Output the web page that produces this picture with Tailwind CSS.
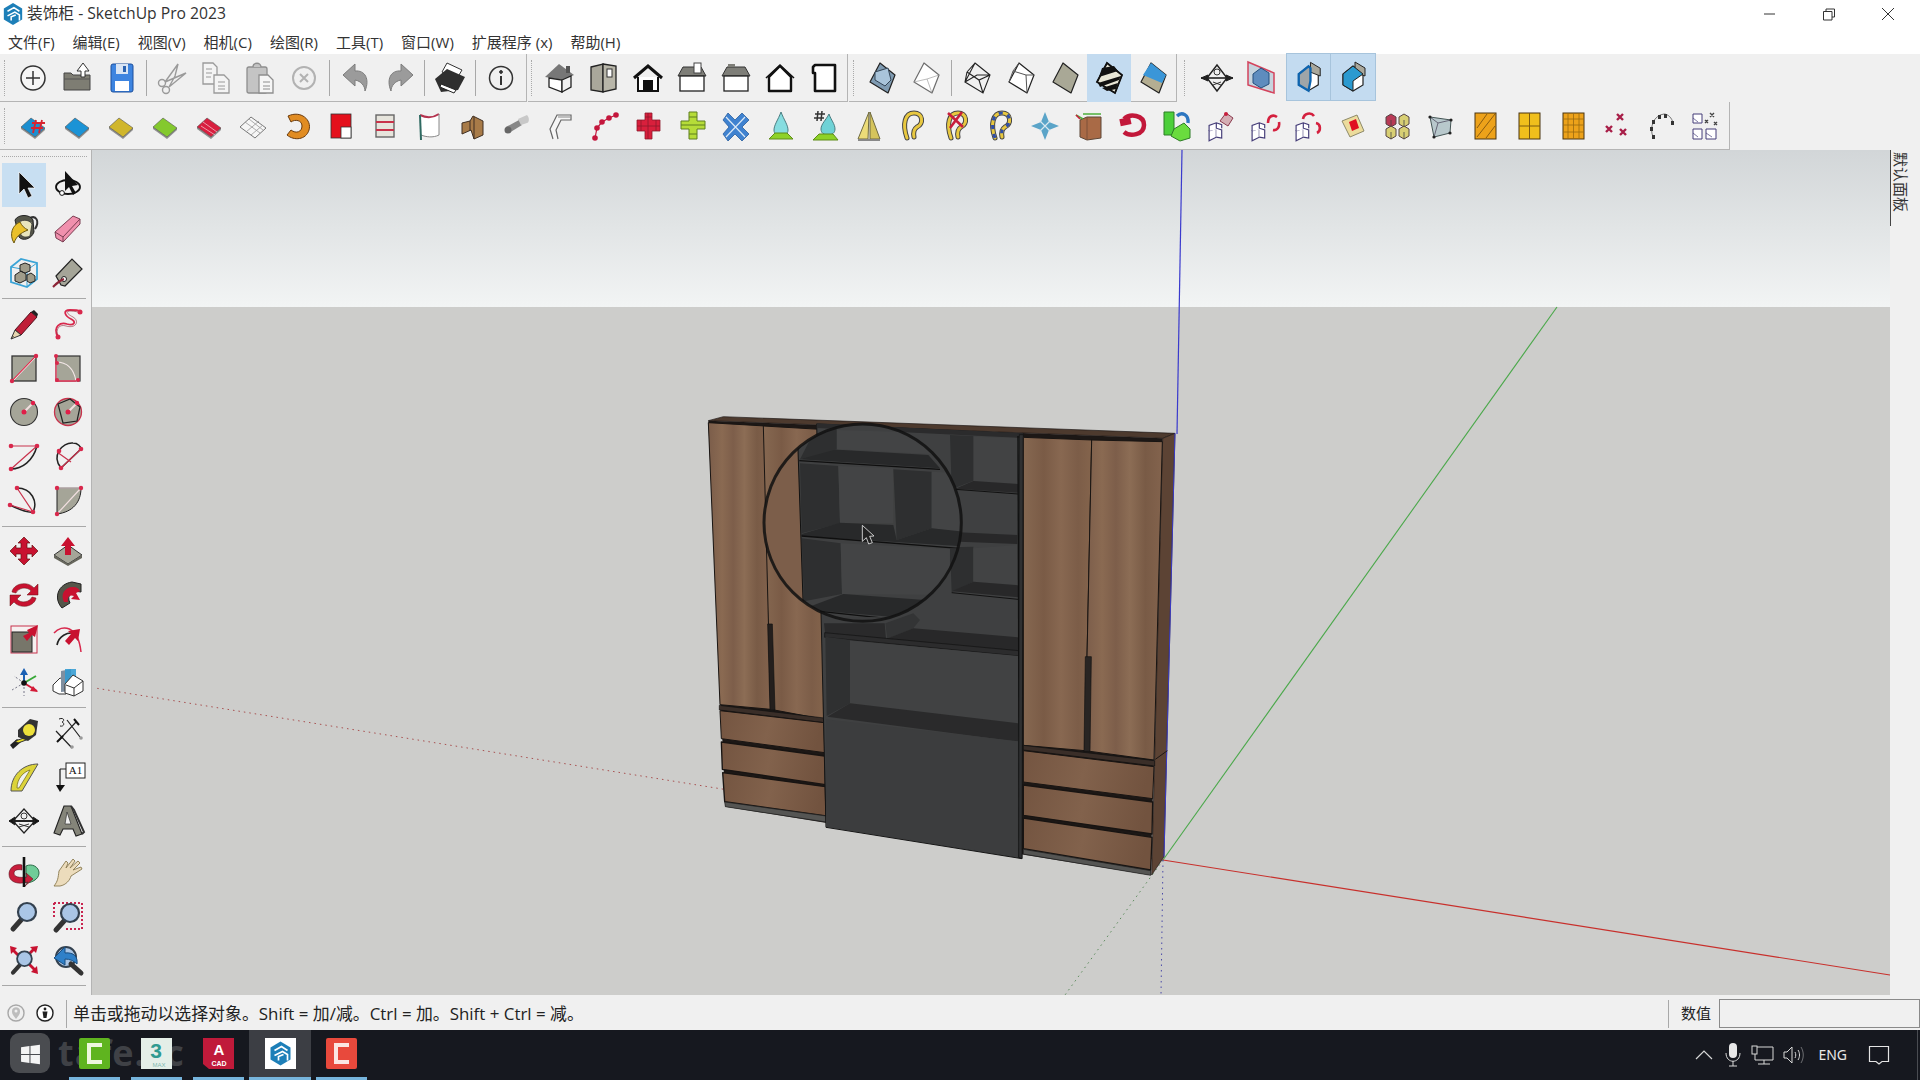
<!DOCTYPE html>
<html lang="zh-CN">
<head>
<meta charset="UTF-8">
<title>装饰柜 - SketchUp Pro 2023</title>
<script src="https://cdn.jsdelivr.net/npm/@tailwindcss/browser@4"></script>
</head>
<body class="w-[1920px] h-[1080px] overflow-hidden flex flex-col bg-white text-[#222] font-['Open_Sans','Noto_Sans_CJK_SC',sans-serif]">

<!-- shared icon parts -->
<svg class="absolute w-0 h-0">
  <defs>
    <g id="plane"><path d="M-12 1L-2-8L12 2L2 11z" stroke="#555" stroke-width=".6"/><path d="M-12 1L2 11L12 2L12 4L2 13L-12 3z" fill="#444" opacity=".55"/></g>
    <g id="hook"><path d="M-6 12C-11-2-8-13 1-13C10-13 11-2 4 1C1 3 0 6 1 11" fill="none" stroke="#444" stroke-width="5" stroke-linecap="round"/><path d="M-6 12C-11-2-8-13 1-13C10-13 11-2 4 1C1 3 0 6 1 11" fill="none" stroke="#e8c840" stroke-width="3" stroke-linecap="round"/></g>
    <g id="wirebox" fill="#fff" stroke="#443c78" stroke-width="1.3"><path d="M-11 1L-3-2V8L-11 12z"/><path d="M-11 1V-5L-3-8L3-6V-2M-3-8V-2L3 0V9L-3 8"/></g>
    <g id="house"><path d="M-14-2L-9-11H9L14-2z" fill="#7e7e78" stroke="#333"/><rect x="-12" y="-2" width="24" height="15" fill="#fff" stroke="#222" stroke-width="1.3"/></g>
    <g id="bigbox"><path d="M-2-15L13-3L6 15L-12 4z" stroke="#222" stroke-width="1.2" stroke-linejoin="round"/></g>
    <g id="arrowhouse"><path d="M-10-3L0-11L10-3V8L0 14L-10 8z" fill="#fff" stroke="#222" stroke-width="1.2"/><path d="M2-15L12-9V-1L2-5z" fill="#a9a79b" stroke="#222"/></g>
    <g id="mag"><path d="M-11 13L-3 4" stroke="#333" stroke-width="5" stroke-linecap="round"/><circle cx="3" cy="-4" r="9" fill="#aac6e6" stroke="#33414f" stroke-width="2.2"/></g>
    <g id="su"><circle r="12" fill="#fff"/><path d="M-10-6L0-12L10-6V6L0 12L-10 6z" fill="#1d7fb8"/><path d="M-6-3L1-7L7-3M-6 2L2-2L7 1V7M-2 7V3L3 1" fill="none" stroke="#fff" stroke-width="1.7"/></g>
  </defs>
</svg>

<!-- title bar -->
<header class="h-[27px] flex items-center pl-[2px] relative">
  <svg class="w-[22px] h-[22px]" viewBox="-12 -12 24 24"><use href="#su"/></svg>
  <span class="ml-[3px] text-[15.7px] leading-none text-[#333]">装饰柜 - SketchUp Pro 2023</span>
  <div class="ml-auto flex items-center gap-[39px] pr-[22px] pt-[1px]">
    <svg class="w-5 h-5" viewBox="0 0 20 20"><path d="M4 10H15" stroke="#333"/></svg>
    <svg class="w-5 h-5" viewBox="0 0 20 20" fill="none" stroke="#333"><path d="M4.5 7.5H13V16H4.5zM7 7.5V5H15.5V13H13"/></svg>
    <svg class="w-5 h-5" viewBox="0 0 20 20"><path d="M4 4L16 16M16 4L4 16" stroke="#333"/></svg>
  </div>
</header>

<!-- menu bar -->
<nav class="h-[27px] flex items-center pl-[8px] pt-[4px] gap-[18px] text-[15px] leading-none text-[#333]">
  <span>文件(F)</span><span>编辑(E)</span><span>视图(V)</span><span>相机(C)</span><span>绘图(R)</span><span>工具(T)</span><span>窗口(W)</span><span>扩展程序 (x)</span><span>帮助(H)</span>
</nav>

<!-- toolbar row 1 -->
<div class="h-12 bg-[#f0f0f0] flex">
  <div class="flex w-[527px] pl-[4px] border-b border-r border-[#b4b4b4] items-start">
    <div class="w-[7px] h-[36px] mt-[6px] border-l border-dotted border-[#aaa]"></div>
    <svg class="w-11 h-[47px]" viewBox="-22 -24 44 47"><circle r="12" fill="#f6f6f6" stroke="#333" stroke-width="1.5"/><path d="M-7 0H7M0-7V7" stroke="#333" stroke-width="1.5"/></svg>
    <svg class="w-11 h-[47px]" viewBox="-22 -24 44 47"><path d="M-13-5H-6L-4-3H13V12H-13z" fill="#7e7d73" stroke="#444"/><path d="M-13 1H13" stroke="#555"/><path d="M4-1V-7H0L6-15L12-7H8V-1z" fill="#fff" stroke="#333"/></svg>
    <svg class="w-11 h-[47px]" viewBox="-23 -24 44 47"><rect x="-11" y="-14" width="22" height="28" rx="2" fill="#3d84e0" stroke="#1c4f9c"/><rect x="-6" y="-14" width="12" height="10" fill="#d8e4f4"/><rect x="1" y="-12" width="3" height="6" fill="#2a62b0"/><rect x="-7" y="3" width="14" height="10" fill="#fff"/></svg>
    <div class="w-px h-9 mx-[3px] mt-[6px] bg-[#a8a8a8]"></div>
    <svg class="w-11 h-[47px]" viewBox="-22 -24 44 47" fill="none" stroke="#9a9a9a" stroke-width="1.4"><circle cx="-10" cy="5" r="3.5"/><circle cx="-6" cy="12" r="3.5"/><path d="M-7 4L6-14L3-2L-3 9M-7 4L14-5L-3 9"/></svg>
    <svg class="w-11 h-[47px]" viewBox="-22 -24 44 47" fill="#f4f4f4" stroke="#9a9a9a" stroke-width="1.3"><path d="M-13-15H-3L1-11V6H-13z"/><path d="M-2-3H8L13 2V15H-2z"/><path d="M-10-9H-4M-10-5H-4M-10-1H-5M2 4H9M2 8H9M2 11H9" stroke-width="1"/></svg>
    <svg class="w-11 h-[47px]" viewBox="-22 -24 44 47" stroke="#8e8e8e" stroke-width="1.3"><rect x="-13" y="-11" width="20" height="26" rx="2" fill="#c4c4c4"/><path d="M-7-11C-7-16 1-16 1-11" fill="#c4c4c4"/><path d="M-1-3H8L13 2V15H-1z" fill="#f6f6f6"/><path d="M3 4H10M3 8H10M3 11H10" stroke-width="1"/></svg>
    <svg class="w-11 h-[47px]" viewBox="-22 -24 44 47" fill="none" stroke="#b2b2b2"><circle r="11" stroke-width="2"/><path d="M-4-4L4 4M4-4L-4 4" stroke-width="2"/></svg>
    <div class="w-px h-9 mx-[3px] mt-[6px] bg-[#a8a8a8]"></div>
    <svg class="w-11 h-[47px]" viewBox="-24 -24 44 47"><path d="M-14-3L-2-14V-7C8-8 13 1 8 13C8 8 4 3-2 2V8z" fill="#9b9b9b" stroke="#7c7c7c"/></svg>
    <svg class="w-11 h-[47px]" viewBox="-22 -24 44 47"><path transform="scale(-1 1)" d="M-14-3L-2-14V-7C8-8 13 1 8 13C8 8 4 3-2 2V8z" fill="#9b9b9b" stroke="#7c7c7c"/></svg>
    <div class="w-px h-9 mx-[3px] mt-[6px] bg-[#a8a8a8]"></div>
    <svg class="w-11 h-[47px]" viewBox="-22 -24 44 47"><path d="M-3-15L12-8L6 2L-8-6z" fill="#fff" stroke="#333"/><path d="M-15 1L-3-9L15-1L8 12L-9 14z" fill="#2f2f2f"/><path d="M-9 6L6 12L4 15L-10 9z" fill="#fff" stroke="#222"/></svg>
    <div class="w-px h-9 mx-[3px] mt-[6px] bg-[#a8a8a8]"></div>
    <svg class="w-11 h-[47px]" viewBox="-22 -24 44 47" fill="none" stroke="#333"><circle r="11.5" stroke-width="1.5"/><circle cy="-6" r="1.4" fill="#333"/><path d="M0-2V7" stroke-width="2"/></svg>
  </div>
  <div class="flex w-[320px] ml-[1px] pl-[3px] border-b border-r border-[#b4b4b4] items-start">
    <div class="w-[7px] h-[36px] mt-[6px] border-l border-dotted border-[#aaa]"></div>
    <svg class="w-11 h-[47px]" viewBox="-22 -24 44 47"><path d="M-15-1L-1-14L14-3L3 2z" fill="#777"/><path d="M-11 0L2 2V14L-11 9z" fill="#fff" stroke="#222" stroke-width="1.3"/><path d="M2 2L11-2V9L2 14z" fill="#f0f0f0" stroke="#222" stroke-width="1.3"/><path d="M6-12H10V-5H6z" fill="#555"/></svg>
    <svg class="w-11 h-[47px]" viewBox="-22 -24 44 47"><path d="M-13-11L-1-14V14L-13 12z" fill="#a9a79b" stroke="#222" stroke-width="1.3"/><path d="M-1-14L12-12V11L-1 14z" fill="#b8b6a9" stroke="#222" stroke-width="1.3"/><rect x="3" y="-9" width="5" height="8" fill="#fff" stroke="#333"/></svg>
    <svg class="w-11 h-[47px]" viewBox="-22 -24 44 47"><path d="M-14 0L0-12L14 0" fill="none" stroke="#111" stroke-width="3"/><path d="M-10-1V13H10V-1" fill="#fff" stroke="#111" stroke-width="2"/><rect x="-5" y="2" width="10" height="11" fill="#111"/></svg>
    <svg class="w-11 h-[47px]" viewBox="-22 -24 44 47"><use href="#house"/><rect x="2" y="-15" width="7" height="10" fill="#fff" stroke="#444"/></svg>
    <svg class="w-11 h-[47px]" viewBox="-22 -24 44 47"><use href="#house"/><rect x="-8" y="-14" width="7" height="3" fill="#7e7e78"/></svg>
    <svg class="w-11 h-[47px]" viewBox="-22 -24 44 47"><path d="M-11-1L0-12L11-1V13H-11z" fill="#fff" stroke="#111" stroke-width="2.4" stroke-linejoin="round"/><path d="M-14 0L0-13L14 0" fill="none" stroke="#111" stroke-width="1.6"/></svg>
    <svg class="w-11 h-[47px]" viewBox="-22 -24 44 47"><path d="M-9-13H11V13H-9V-5H-11V-11z" fill="#fff" stroke="#111" stroke-width="2.6" stroke-linejoin="round"/></svg>
  </div>
  <div class="flex w-[328px] ml-[1px] pl-[4px] border-b border-r border-[#b4b4b4] items-start">
    <div class="w-[7px] h-[36px] mt-[6px] border-l border-dotted border-[#aaa]"></div>
    <svg class="w-11 h-[47px]" viewBox="-22 -24 44 47"><use href="#bigbox" fill="#7f9bb2"/><path d="M-7-6L6-10L9 2L3 8L-7 2z" fill="#a9c4da" stroke="#345"/></svg>
    <svg class="w-11 h-[47px]" viewBox="-22 -24 44 47" stroke-opacity=".65"><use href="#bigbox" fill="#fff"/><path d="M-12 4L1 1L13-3M1 1L6 15" fill="none" stroke="#999"/></svg>
    <div class="w-px h-9 mx-[3px] mt-[6px] bg-[#a8a8a8]"></div>
    <svg class="w-11 h-[47px]" viewBox="-22 -24 44 47" fill="none" stroke="#222" stroke-width="1.1"><path d="M-2-15L13-3L6 15L-12 4zM-10-6L-2-15M-10-6L-12 4M-10-6L2 2L13-3M2 2L6 15M-12 4L0 -3L13-3"/></svg>
    <svg class="w-11 h-[47px]" viewBox="-22 -24 44 47"><use href="#bigbox" fill="#fff"/><path d="M-12 4L-8-7L-2-15M-8-7L5-3L13-3M5-3L6 15" fill="none" stroke="#555"/></svg>
    <svg class="w-11 h-[47px]" viewBox="-22 -24 44 47"><use href="#bigbox" fill="#a9a896"/></svg>
    <svg class="w-11 h-12 bg-[#c3dbf0]" viewBox="-22 -24 44 48"><use href="#bigbox" fill="#e8e6d6"/><path d="M-7-10L5-12L9-7L-10-1zM-11 5L12-2L10 2L-9 9zM-7 10L9 5L7 11L-2 13z" fill="#111"/><path d="M-2-15L13-3L6 15L-12 4z" fill="none" stroke="#111" stroke-width="1.8"/></svg>
    <svg class="w-11 h-[47px]" viewBox="-22 -24 44 47"><use href="#bigbox" fill="#b4ae92"/><path d="M-2-15L13-3L9 5L-10-3z" fill="#3a96d8"/></svg>
  </div>
  <div class="flex ml-[1px] pl-[6px] items-start">
    <div class="w-[11px] h-[36px] mt-[6px] border-l border-dotted border-[#aaa]"></div>
    <svg class="w-11 h-[47px]" viewBox="-22 -24 44 47" fill="none" stroke="#222"><path d="M-16 0H16" stroke-width="1.6"/><path d="M-16 0L-9-3V3zM16 0L9-3V3z" fill="#222"/><path d="M-10 0L0-13L10 0L0 13z" stroke-width="1.4"/><circle cy="-6" r="3" stroke-width=".9"/><path d="M-4 7L4 4M-4 4L4 7" stroke-width=".9"/></svg>
    <svg class="w-11 h-[47px]" viewBox="-22 -24 44 47"><path d="M-13-16L13-5V15L-13 7z" fill="#c6d4de" stroke="#d4435c" stroke-width="1.5"/><path d="M-8-4L0-10L8-5V6L0 10L-8 5z" fill="#5e8cbe" stroke="#254f7c"/></svg>
    <div class="flex h-12 bg-[#c3dbf0] border border-[#a7c4dc] ml-[3px] -mt-px items-center">
      <svg class="w-[44px] h-[46px] border-r border-[#a7c4dc]" viewBox="-22 -23 44 46"><use href="#arrowhouse"/><path d="M-10-3L0-11L2-9V4L0 14L-10 8z" fill="#9fa5a8" stroke="#0e64ae" stroke-width="2.4"/></svg>
      <svg class="w-[44px] h-[46px]" viewBox="-22 -23 44 46"><use href="#arrowhouse"/><path d="M-10-3L0-11L10-3L0 4V14L-10 8z" fill="#2b9ad0" stroke="#222"/></svg>
    </div>
  </div>
</div>

<!-- toolbar row 2 -->
<div class="h-12 bg-[#f0f0f0] flex">
  <div class="w-[1730px] flex pl-[4px] border-b border-r border-[#b4b4b4] items-start">
    <div class="w-[7px] h-[36px] mt-[6px] border-l border-dotted border-[#aaa]"></div>
    <svg class="w-11 h-[47px]" viewBox="-22 -24 44 47"><use href="#plane" fill="#1b8fd0"/><path d="M3-6L0 7M9-6L6 7M-1-3H12M-2 2H10" stroke="#d8232f" stroke-width="1.8" fill="none"/></svg>
    <svg class="w-11 h-[47px]" viewBox="-22 -24 44 47"><use href="#plane" fill="#1b93d6"/></svg>
    <svg class="w-11 h-[47px]" viewBox="-22 -24 44 47"><use href="#plane" fill="#d0b62c"/></svg>
    <svg class="w-11 h-[47px]" viewBox="-22 -24 44 47"><use href="#plane" fill="#84c92e"/></svg>
    <svg class="w-11 h-[47px]" viewBox="-22 -24 44 47"><use href="#plane" fill="#d81f3f"/><path d="M-6-4L8 6M-8 0L6 9" stroke="#fff" stroke-opacity=".55"/></svg>
    <svg class="w-11 h-[47px]" viewBox="-22 -24 44 47"><path d="M-13 1L-2-9L13 2L2 12z" fill="#f6f6f6" stroke="#777"/><path d="M-8-4L7 7M-4-7L10 4M-7 6L6-5M-2 9L10-1" stroke="#999" stroke-width=".8"/></svg>
    <svg class="w-11 h-[47px]" viewBox="-22 -24 44 47"><path d="M-9-10C4-16 15-6 12 4C9 14-3 15-10 9L-6 4C-1 8 5 6 5 0C5-6-2-7-6-4z" fill="#e18c22" stroke="#6a3a0c"/></svg>
    <svg class="w-11 h-[47px]" viewBox="-22 -24 44 47"><rect x="-10" y="-12" width="20" height="24" fill="#e4101c" stroke="#333" stroke-width=".8"/><rect x="0" y="1" width="10" height="11" fill="#fff" stroke="#333" stroke-width=".8"/></svg>
    <svg class="w-11 h-[47px]" viewBox="-22 -24 44 47" fill="none"><rect x="-9" y="-11" width="18" height="22" fill="#e6e4dc" stroke="#666" stroke-width="1.4"/><path d="M-9-4H9M-9 4H9" stroke="#c8324a" stroke-width="2"/></svg>
    <svg class="w-11 h-[47px]" viewBox="-22 -24 44 47" fill="none"><path d="M-9-11C-3-8 4-8 10-12V9C4 12-3 11-8 9z" fill="#fff"/><path d="M-9-11C-3-8 4-8 10-12" stroke="#b4324e" stroke-width="2"/><path d="M10-12V9C4 12-3 11-8 9" stroke="#888"/><path d="M-9-11L-8 14" stroke="#2f6a62" stroke-width="2"/></svg>
    <svg class="w-11 h-[47px]" viewBox="-22 -24 44 47"><path d="M-11-3L-3-5L0-10L10-5V9L1 13L-2 4L-11 8z" fill="#a87b48" stroke="#3f2f22"/><path d="M1-9V13" stroke="#3f2f22"/><path d="M-3-5V5" stroke="#3f2f22"/></svg>
    <svg class="w-11 h-[47px]" viewBox="-22 -24 44 47"><path d="M-11 1L2-6L5-1L-8 7z" fill="#888"/><circle cx="-9" cy="4" r="3.5" fill="#666"/><path d="M1-7L10-11C13-8 12-3 10-3L4-1z" fill="#c8c8c8"/></svg>
    <svg class="w-11 h-[47px]" viewBox="-22 -24 44 47" fill="none"><path d="M-8 13L-11 3L-4-11H10V-6H0L-5 4L-3 13" fill="#f6f6f6" stroke="#666" stroke-width="1.2"/><path d="M-3-9H9" stroke="#888"/></svg>
    <svg class="w-11 h-[47px]" viewBox="-22 -24 44 47"><path d="M-10 12L-8 2L-3-4L4-8L11-11" fill="none" stroke="#c4163c" stroke-width="1.2"/><g fill="#c4163c"><circle cx="-10" cy="12" r="2.8"/><circle cx="-8" cy="2" r="2.8"/><circle cx="-3" cy="-4" r="2.8"/><circle cx="4" cy="-8" r="2.8"/><circle cx="11" cy="-11" r="2.8"/></g></svg>
    <svg class="w-11 h-[47px]" viewBox="-22 -24 44 47"><path d="M-4-13H3V-6H11V5H3V13H-4V5H-12V-6H-4z" fill="#d91f3c" stroke="#8e1a2c" stroke-width=".8"/><path d="M-12 0H11M-4-9H3M-1-13V13M-8-6V5M7-6V5" stroke="#8e1a2c" stroke-width=".8"/></svg>
    <svg class="w-11 h-[47px]" viewBox="-22 -24 44 47"><path d="M-4-14H4V-5H12V3H4V13H-4V3H-12V-5H-4z" fill="#b6dc38" stroke="#5f7f20"/><path d="M-12-1H12M-4-9H4M-4 8H4" stroke="#5f7f20"/></svg>
    <svg class="w-11 h-[47px]" viewBox="-22 -24 44 47"><path d="M-9-13L-2-6L5-13L12-6L5 1L12 8L5 15L-2 8L-9 15L-14 8L-8 1L-14-6z" fill="#3f82d0" stroke="#2a5e9e" stroke-width=".8"/><path d="M-11-9L8 11M8-9L-11 11" stroke="#dbe9f6" stroke-width="1.2"/></svg>
    <svg class="w-11 h-[47px]" viewBox="-22 -24 44 47"><path d="M0-14C3-6 7-1 7 4C7 8 4 10 0 10C-4 10-7 8-7 4C-7-1-3-6 0-14z" fill="#86dde0" stroke="#4a7c80"/><path d="M-12 13L-6 7H6L12 13z" fill="#8ed228" stroke="#5f8c18"/></svg>
    <svg class="w-11 h-[47px]" viewBox="-22 -24 44 47"><path d="M4-12C6-6 10-2 10 3C10 7 7 9 3 9C-1 9-4 7-4 3C-4-2 1-6 4-12z" fill="#6fd2d6" stroke="#4a7c80"/><path d="M-12 14L-6 8H8L13 14z" fill="#8ed228" stroke="#5f8c18"/><path d="M-7-15L-8-5M-3-15L-4-5M-10-12H0M-11-8H-1" stroke="#333" stroke-width="1.5" fill="none"/></svg>
    <svg class="w-11 h-[47px]" viewBox="-22 -24 44 47"><path d="M0-14L-11 13H-1z" fill="#ecdc78" stroke="#6f6a40"/><path d="M1-14L11 13H1z" fill="#d5c45c" stroke="#6f6a40"/><path d="M-11 14H11" stroke="#888" stroke-width="2"/></svg>
    <svg class="w-11 h-[47px]" viewBox="-22 -24 44 47"><use href="#hook"/></svg>
    <svg class="w-11 h-[47px]" viewBox="-22 -24 44 47"><use href="#hook"/><path d="M-9-13L6 1M5-14L-7 2" stroke="#c81e3c" stroke-width="2.6"/></svg>
    <svg class="w-11 h-[47px]" viewBox="-22 -24 44 47"><use href="#hook"/><path d="M-6 12C-11-2-8-13 1-13C10-13 11-2 4 1C1 3 0 6 1 11" fill="none" stroke="#2f4ea8" stroke-width="3" stroke-dasharray="4 5"/></svg>
    <svg class="w-11 h-[47px]" viewBox="-22 -24 44 47"><path d="M0-14L4-4L14 0L4 4L0 14L-4 4L-14 0L-4-4z" fill="#5aa4c8"/><path d="M-5-5L5 5M5-5L-5 5" stroke="#d8e8f0" stroke-width="1.2"/></svg>
    <svg class="w-11 h-[47px]" viewBox="-22 -24 44 47"><path d="M-9-6L-2-9H12V12L-2 14L-9 11z" fill="#a96a46" stroke="#5d4636"/><path d="M-2-9V14" stroke="#7c5038"/><path d="M-13-11L-6-7M-6-12H12" stroke="#4eae3c" stroke-width="1.6"/><path d="M-13-11L-9-7" stroke="#c81e3c" stroke-width="1.6"/></svg>
    <svg class="w-11 h-[47px]" viewBox="-22 -24 44 47"><path d="M-9-7C-3-13 11-11 11-1C11 9-3 11-9 6" fill="none" stroke="#c2183a" stroke-width="4.5"/><path d="M-13-8H-2V-1H-13z" fill="#c2183a" transform="rotate(-12 -7 -4)"/></svg>
    <svg class="w-11 h-[47px]" viewBox="-22 -24 44 47"><path d="M-13-14H-3V9H-13z" fill="#4ccf3a" stroke="#2d7c26"/><path d="M-3 3L7-3L13 3V12L3 15L-6 10z" fill="#6adc3e" stroke="#2d7c26"/><path d="M0-10C5-15 12-11 11-3" fill="none" stroke="#2d76c0" stroke-width="3.4"/></svg>
    <svg class="w-11 h-[47px]" viewBox="-22 -24 44 47"><use href="#wirebox" transform="translate(-2 4) scale(.9)"/><path d="M-1-5L5-13L12-8L7 0z" fill="#d4aeb4" stroke="#8a3a4e"/><circle cx="5" cy="-12" r="2" fill="#c81e3c"/></svg>
    <svg class="w-11 h-[47px]" viewBox="-22 -24 44 47"><use href="#wirebox" transform="translate(-3 4) scale(.9)"/><path d="M3-3C3-10 8-12 12-9M14-4C15 1 12 5 8 4" fill="none" stroke="#d4203e" stroke-width="2.6"/></svg>
    <svg class="w-11 h-[47px]" viewBox="-22 -24 44 47"><use href="#wirebox" transform="translate(-3 4) scale(.9)"/><path d="M-6-7C-5-13 2-14 5-10M7-3C12-2 12 5 8 7" fill="none" stroke="#d4203e" stroke-width="2.6"/></svg>
    <svg class="w-11 h-[47px]" viewBox="-22 -24 44 47"><path d="M-11-5L4-11L11 5L-3 11z" fill="#ecdc9c" stroke="#8d8a6a"/><path d="M-4-4L3-7L6 2L-1 5z" fill="#e00d20"/></svg>
    <svg class="w-11 h-[47px]" viewBox="-22 -24 44 47"><g stroke="#544"><path d="M-11-9L-6-12L-1-9V-2L-6 1L-11-2z" fill="#b83a56"/><path d="M2-9L7-12L12-9V-2L7 1L2-2z" fill="#d8cf74"/><path d="M-11 3L-6 0L-1 3V10L-6 13L-11 10z" fill="#d8cf74"/><path d="M2 3L7 0L12 3V10L7 13L2 10z" fill="#d8cf74"/></g><path d="M-6-6V1M7-6V1M-6 6V13M7 6V13" stroke="#444" stroke-width=".8"/></svg>
    <svg class="w-11 h-[47px]" viewBox="-22 -24 44 47"><path d="M-11-9L10-6L9 7L-7 11z" fill="#b8c8cc" stroke="#455"/><path d="M-11-9L-3-3L10-6M-3-3L-7 11" stroke="#667" fill="none"/><g fill="#222"><circle cx="-11" cy="-9" r="1.6"/><circle cx="10" cy="-6" r="1.6"/><circle cx="9" cy="7" r="1.6"/><circle cx="-7" cy="11" r="1.6"/></g></svg>
    <svg class="w-11 h-[47px]" viewBox="-22 -24 44 47"><rect x="-10" y="-13" width="21" height="26" fill="#eda21a" stroke="#4a3410"/><path d="M-8 2L2-12M-8 11L10-12M1 12L10 0" stroke="#8a5c10"/></svg>
    <svg class="w-11 h-[47px]" viewBox="-22 -24 44 47"><rect x="-10" y="-13" width="21" height="26" fill="#f0bf1c" stroke="#4a3410"/><path d="M.5-13V13M-10 0H11" stroke="#7a5a10"/></svg>
    <svg class="w-11 h-[47px]" viewBox="-22 -24 44 47"><rect x="-10" y="-13" width="21" height="26" fill="#eda21a" stroke="#4a3410"/><path d="M-5-13V13M.5-13V13M6-13V13M-10-7H11M-10-1H11M-10 6H11" stroke="#9b6a10" stroke-width=".8"/></svg>
    <svg class="w-11 h-[47px]" viewBox="-22 -24 44 47" stroke="#a81e48" stroke-width="2.4"><path d="M0-12L6-6M6-12L0-6M-11 0L-5 6M-5 0L-11 6M3 3L9 9M9 3L3 9"/></svg>
    <svg class="w-11 h-[47px]" viewBox="-22 -24 44 47"><path d="M-8 11C-12 1-7-11 3-12C7-12 11-8 12-3" fill="none" stroke="#555" stroke-width=".8"/><g fill="#333"><rect x="-9" y="9" width="3" height="4"/><rect x="-11" y="1" width="3" height="4"/><rect x="-9" y="-6" width="3" height="4"/><rect x="-3" y="-11" width="3" height="4"/><rect x="3" y="-12" width="3" height="4"/><rect x="10" y="-5" width="3" height="4"/></g></svg>
    <svg class="w-11 h-[47px]" viewBox="-22 -24 44 47"><path d="M-12-12H-3V-3H-12zM-12 3H-3V13H-12zM1 3H11V13H1z" fill="#fff" stroke="#443c78"/><path d="M-12-8L-7-4M-12 7L-7 11M1 7L7 11" stroke="#443c78" stroke-width=".7"/><path d="M5-13L9-9M9-13L5-9M0-6L3-3M3-6L0-3M9-4L12-1M12-4L9-1" stroke="#444" stroke-width="1.4"/></svg>
  </div>
</div>

<!-- main area -->
<main class="flex-1 flex min-h-0">
  <aside class="w-[92px] bg-[#f0f0f0] border-r border-[#b4b4b4] pl-[2px]">
    <div class="h-[13px] flex items-center pr-[4px]"><div class="w-full border-t border-dotted border-[#aaa]"></div></div>
    <div class="grid grid-cols-[44px_44px] auto-rows-min">
      <svg class="w-11 h-11 bg-[#c8dff2]" viewBox="-22 -22 44 44"><path d="M-5-13V9L0 4L4 13L8 11L4 3L11 3z" fill="#111" stroke="#fff" stroke-width=".7"/></svg>
      <svg class="w-11 h-11" viewBox="-22 -22 44 44"><ellipse cy="2" rx="12" ry="7" fill="none" stroke="#111" stroke-width="1.8"/><circle cx="-6" cy="8" r="2.4" fill="#fff" stroke="#111"/><path d="M-3-14V6L1 2L5 10L8 8L4 1L10 0z" fill="#111"/></svg>

      <svg class="w-11 h-11" viewBox="-22 -22 44 44"><path d="M6-11C12-14 16-8 11 0" fill="none" stroke="#333" stroke-width="2"/><path d="M-9-9C-6-15 6-15 9-9L10 3C7 11-2 12-5 8z" fill="#55564a" stroke="#222"/><path d="M-7-5C-3-10 5-10 8-5L6 7C2 9-1 8-3 6z" fill="#e8e4bc" stroke="#333" stroke-width=".8"/><path d="M-4-7C-12-4-15 6-10 14C-8 8-4 4 4 1C0-1-2-3-4-7z" fill="#eac02a" stroke="#6e5a10"/></svg>
      <svg class="w-11 h-11" viewBox="-22 -22 44 44"><path d="M-13 3L5-13L12-10L12-5L-5 13L-12 9z" fill="#f090ad" stroke="#7a3e52"/><path d="M-13 3L-5 8L12-10" fill="none" stroke="#7a3e52"/><path d="M-5 8V13" stroke="#7a3e52"/></svg>

      <svg class="w-11 h-11" viewBox="-22 -22 44 44"><path d="M-13-6L-3-14L13-10V6L3 14L-13 9z" fill="none" stroke="#3ba4d6" stroke-width="1.8"/><path d="M-13-6L3-3L13-10M3-3V14" stroke="#3ba4d6" fill="none"/><path d="M-9 2L-3-2L2 1V7L-4 10L-9 8zM-4-8L1-10L6-8V-2L1 0L-4-2zM3 2L7 0L11 3V8L6 10L3 8z" fill="#a09c8a" stroke="#222"/></svg>
      <svg class="w-11 h-11" viewBox="-22 -22 44 44"><path d="M-12 3L4-14L14-4L-3 13L-7 12z" fill="#a5a598" stroke="#222" stroke-width="1.2"/><circle cx="-4" cy="6" r="2.5" fill="#fff" stroke="#222"/><path d="M-4 6C-10 8-13 12-15 14" stroke="#8c2436" stroke-width="2" fill="none"/></svg>

      <div class="col-span-2 h-[7px] pt-[3px] pr-[4px]"><div class="h-px bg-[#a8a8a8]"></div></div>

      <svg class="w-11 h-11" viewBox="-22 -22 44 44"><path d="M-9 6L7-12L13-7L-3 11z" fill="#c01e38" stroke="#51101c"/><path d="M7-12L10-14L14-10L13-7z" fill="#222"/><path d="M-9 6L-3 11L-13 15z" fill="#e6d6b0" stroke="#333"/><path d="M-13 15L-10 12L-11 12z" fill="#222"/></svg>
      <svg class="w-11 h-11" viewBox="-22 -22 44 44"><path d="M-10 13C-16 2-7-2-1 0C6 2 9-2 3-5C-3-8-6-14 2-14C8-14 13-14 12-11" fill="none" stroke="#d8284c" stroke-width="1.8"/><path d="M-10 13C-13 4-8 0-2 2C8 5 12-3 5-7C-1-10-3-13 3-13C7-13 10-12 12-11" fill="none" stroke="#8b2c3c" stroke-width=".6"/><circle cx="-10" cy="13" r="2.5" fill="#d8284c"/><circle cx="12" cy="-12" r="2.5" fill="#d8284c"/></svg>

      <svg class="w-11 h-11" viewBox="-22 -22 44 44"><rect x="-12" y="-12" width="24" height="25" fill="#a5a598" stroke="#333" stroke-width="1.3"/><path d="M-12 13L12-12" stroke="#e8284c" stroke-width="1.2"/><path d="M-11 13L13-12" stroke="#fff" stroke-width=".8"/><circle cx="-12" cy="13" r="2.2" fill="#d8284c"/><circle cx="12" cy="-12" r="2.2" fill="#d8284c"/></svg>
      <svg class="w-11 h-11" viewBox="-22 -22 44 44"><rect x="-12" y="-12" width="24" height="25" fill="#a5a598" stroke="#333" stroke-width="1.2"/><path d="M-12 13V-6C0-6 6 2 8 13z" fill="#a5a598" stroke="#f4e8e8" stroke-width="1.2"/><path d="M-12-12V13H8" fill="none" stroke="#d8284c" stroke-width="1.3"/><g fill="#d8284c"><circle cx="-12" cy="-12" r="2"/><circle cx="-11" cy="-5" r="2"/><circle cx="-11" cy="12" r="2"/><circle cx="10" cy="12" r="2"/></g></svg>

      <svg class="w-11 h-11" viewBox="-22 -22 44 44"><circle r="13.5" fill="#a5a598" stroke="#333" stroke-width="1.1"/><path d="M0 0L9-9" stroke="#f2dfe0" stroke-width="2"/><circle r="2.5" fill="#e01e48"/><circle cx="9" cy="-9" r="2.2" fill="#e01e48"/></svg>
      <svg class="w-11 h-11" viewBox="-22 -22 44 44"><circle r="13.5" fill="#a5a598" stroke="#c8324c" stroke-width="1.3"/><path d="M-10-8L2-13L12-5L9 9L-5 11z" fill="#a5a598" stroke="#222" stroke-width="1.2"/><path d="M0 0L9-9" stroke="#f2dfe0" stroke-width="2"/><circle r="2.5" fill="#e01e48"/><circle cx="9" cy="-9" r="2.2" fill="#e01e48"/></svg>

      <svg class="w-11 h-11" viewBox="-22 -22 44 44" fill="none"><path d="M-13-10H13M-13 13L13-10" stroke="#c8324c" stroke-width="1.2"/><path d="M-13 13C-2 13 9 5 13-10" stroke="#222" stroke-width="1.5"/><g fill="#d8284c"><circle cx="-13" cy="-10" r="2.3"/><circle cx="13" cy="-10" r="2.3"/><circle cx="-13" cy="13" r="2.3"/></g></svg>
      <svg class="w-11 h-11" viewBox="-22 -22 44 44" fill="none"><path d="M-7 12C-17 0-6-14 5-13C10-13 13-9 13-7z" stroke="#222" stroke-width="1.5"/><path d="M-7 12L13-7M-11-4L3 6" stroke="#c8324c" stroke-width="1.2"/><g fill="#d8284c"><circle cx="-7" cy="12" r="2.3"/><circle cx="13" cy="-7" r="2.3"/><circle cx="-9" cy="-5" r="2.3"/></g></svg>

      <svg class="w-11 h-11" viewBox="-22 -22 44 44" fill="none"><path d="M-7-12C8-12 14 2 9 12C3 13-6 9-14 5" stroke="#222" stroke-width="1.5"/><path d="M-7-12L9 12M-14 5L9 12" stroke="#c8324c" stroke-width="1.2"/><g fill="#d8284c"><circle cx="-7" cy="-12" r="2.3"/><circle cx="9" cy="12" r="2.3"/><circle cx="-14" cy="5" r="2.3"/></g></svg>
      <svg class="w-11 h-11" viewBox="-22 -22 44 44"><path d="M-11-12H13C13 2 5 12-11 14z" fill="#a5a598" stroke="#222"/><path d="M-11 14L13-12M-11-12H13" stroke="#f2dfe0" stroke-width="1.2" fill="none"/><g fill="#d8284c"><circle cx="-11" cy="-12" r="2.2"/><circle cx="13" cy="-12" r="2.2"/><circle cx="-11" cy="14" r="2.2"/></g></svg>

      <div class="col-span-2 h-[7px] pt-[4px] pr-[4px]"><div class="h-px bg-[#a8a8a8]"></div></div>

      <svg class="w-11 h-11" viewBox="-22 -22 44 44"><path d="M0-14L6-8H3V-3H8V-6L14 0L8 6V3H3V8H6L0 14L-6 8H-3V3H-8V6L-14 0L-8-6V-3H-3V-8H-6z" fill="#c81230" stroke="#611" stroke-width=".7"/></svg>
      <svg class="w-11 h-11" viewBox="-22 -22 44 44"><path d="M-14 4L0-6L14 4L0 13z" fill="#a5a598" stroke="#333"/><path d="M-14 4V7L0 15L14 7V4L0 13z" fill="#66665c"/><path d="M-3 4V-5H-7L0-14L7-5H3V4z" fill="#c81230"/></svg>

      <svg class="w-11 h-11" viewBox="-22 -22 44 44"><path d="M-12-3C-11-11 3-15 10-7L14-11V0H3L7-4C3-9-6-7-8-2z" fill="#c81230" stroke="#611" stroke-width=".5"/><path d="M12 3C11 11-3 15-10 7L-14 11V0H-3L-7 4C-3 9 6 7 8 2z" fill="#c81230" stroke="#611" stroke-width=".5"/></svg>
      <svg class="w-11 h-11" viewBox="-22 -22 44 44"><path d="M-6 13C-15 3-10-11 4-13L13-11L13-3C4-5-2 0 2 8z" fill="#55564a" stroke="#222"/><path d="M-4 7C-8-1-3-8 5-8C9-8 11-6 12-4L8-2L12 5L3 4L6 1C1-1-1 3 0 7z" fill="#c81230"/></svg>

      <svg class="w-11 h-11" viewBox="-22 -22 44 44"><rect x="-13" y="-13" width="26" height="27" fill="#f6f0f0" stroke="#c8324c"/><rect x="-12" y="-7" width="20" height="20" fill="#77766a" stroke="#222"/><path d="M-1-3L5-6L3-9L14-14L11-2L8-4L3 2z" fill="#c81230"/></svg>
      <svg class="w-11 h-11" viewBox="-22 -22 44 44" fill="none"><path d="M-14-6C-6-15 10-14 13 13" stroke="#d8284c" stroke-width="1.5"/><path d="M-11 6C-9-4 0-6 3-6" stroke="#222" stroke-width="1.6"/><path d="M-3 2L3-5L0-8L12-10L10 2L7-1L1 6z" fill="#c81230"/></svg>

      <svg class="w-11 h-11" viewBox="-22 -22 44 44"><path d="M0-15L4-8H1V0L-1 0V-8H-4z" fill="#1a60b4"/><path d="M0 0L13 8" stroke="#d41c38" stroke-width="2"/><path d="M14 9L6 8L9 3z" fill="#d41c38"/><path d="M0 0L12-7" stroke="#38a838" stroke-width="2"/><path d="M0 0L-10-7M0 0L-12 7M0 0V13" stroke="#778" stroke-dasharray="2 2"/><circle r="2.8" fill="#111"/></svg>
      <svg class="w-11 h-11" viewBox="-22 -22 44 44"><path d="M-15 2L-8-5L-2-3V11H-9L-15 8z" fill="#fff" stroke="#333"/><path d="M-7-12L3-14V8L-7 9z" fill="#7f8fa0"/><path d="M-3-14H8V8H-3z" fill="#2e9ad2" opacity=".85"/><path d="M-3 1L5-8L15-2V8L6 13L-3 10z" fill="#fff" stroke="#333"/><path d="M-2 2L6 5L15-2M6 5V13" stroke="#333" fill="none"/></svg>

      <div class="col-span-2 h-[6px] pt-[2px] pr-[4px]"><div class="h-px bg-[#a8a8a8]"></div></div>

      <svg class="w-11 h-11" viewBox="-22 -22 44 44"><path d="M-14 12L-7 6L-3 9L-11 16z" fill="#222"/><path d="M-9 8L9 2L5 6L-6 10z" fill="#e6dc28" stroke="#333"/><path d="M-6-3L6-14L14-12L12 2L4 8L-6 4z" fill="#333"/><circle cx="5" cy="-3" r="6" fill="#ede03a"/></svg>
      <svg class="w-11 h-11" viewBox="-22 -22 44 44"><path d="M-8 6L8-11M-1-13L12 4M-12-2L4 15" stroke="#222" stroke-width="1.2"/><path d="M-11 9L-5 3M6-14L11-8" stroke="#111" stroke-width="2"/><circle cx="13" cy="5" r="1.8" fill="#999"/><circle cx="4" cy="14" r="1.8" fill="#999"/><path d="M-9-14C-4-16-3-12-6-11C-3-10-4-6-8-7" fill="none" stroke="#222"/></svg>

      <svg class="w-11 h-11" viewBox="-22 -22 44 44"><path d="M-13 14C-13-2-1-13 14-13L-2 14z" fill="#dcd33a" stroke="#555"/><path d="M-7 11C-7 2-1-5 6-7L-5 11z" fill="#f0f0f0" stroke="#7a7420" stroke-width=".8"/></svg>
      <svg class="w-11 h-11" viewBox="-22 -22 44 44"><path d="M-8-8V12" stroke="#222" stroke-width="1.3"/><path d="M-12 8H-3L-8 15z" fill="#111"/><path d="M-8-8H-2" stroke="#222"/><rect x="-2" y="-14" width="19" height="15" fill="#fff" stroke="#222"/><text x="7.5" y="-3" text-anchor="middle" font-family="'Liberation Serif',serif" font-size="11" fill="#111">A1</text></svg>

      <svg class="w-11 h-11" viewBox="-22 -22 44 44" fill="none" stroke="#222"><path d="M-15 0H15" stroke-width="2"/><path d="M-15 0L-9-4V4zM15 0L9-4V4z" fill="#111"/><path d="M-11 0L0-12L11 0L0 12z" stroke-width="1.2"/><circle cy="-5" r="3" stroke-width=".9"/><path d="M-5 6L5 3M-5 3L5 6" stroke-width=".9"/></svg>
      <svg class="w-11 h-11" viewBox="-22 -22 44 44"><path d="M-4-15L3-15L14 13L8 15L5 8H-5L-8 14L-14 12z" fill="#85857a" stroke="#222" stroke-width="1.1"/><path d="M-1-9L3 3H-3z" fill="#f0f0f0" stroke="#333" stroke-width=".7"/><path d="M3-15L6-11L16 11L14 13" fill="none" stroke="#333" stroke-width="2"/></svg>

      <div class="col-span-2 h-[7px] pt-[3px] pr-[4px]"><div class="h-px bg-[#a8a8a8]"></div></div>

      <svg class="w-11 h-11" viewBox="-22 -22 44 44"><path d="M2-6C8-9 15-5 15 1C15 8 6 11 2 11z" fill="#70cc98" stroke="#2a6a46"/><path d="M-2-7C-10-9-15-3-15 2C-15 10-7 13 4 10L1 14L9 7L2 1L3 5C-5 6-10 5-10 1C-10-2-6-3-2-2z" fill="#c81e3c" stroke="#5a1822" stroke-width=".6"/><path d="M0-15V15" stroke="#111" stroke-width="2.6"/></svg>
      <svg class="w-11 h-11" viewBox="-22 -22 44 44"><path d="M-14 14C-10 9-10 6-9-1L-2-11L0-9L-2-4L5-13L7-11L2-4L10-11L12-9L5-2L13-5L14-3L3 4C2 8-2 13-8 14z" fill="#ecdcbc" stroke="#8a7a50" stroke-width=".9"/></svg>

      <svg class="w-11 h-11" viewBox="-22 -22 44 44"><use href="#mag"/></svg>
      <svg class="w-11 h-11" viewBox="-22 -22 44 44"><path d="M-14-13H14V13H-2" fill="none" stroke="#c8244e" stroke-width="2" stroke-dasharray="2 2"/><path d="M-14-13V2" stroke="#c8244e" stroke-width="2" stroke-dasharray="2 2"/><use href="#mag" transform="translate(-1 1)"/></svg>

      <svg class="w-11 h-11" viewBox="-22 -22 44 44"><path d="M-14-14L-7-12L-9-10L-4-5L-6-3L-11-8L-13-6zM14-14L12-7L10-9L5-4L3-6L8-11L6-13zM14 14L7 12L9 10L4 5L6 3L11 8L13 6z" fill="#c81230"/><use href="#mag" transform="translate(-2 2) scale(.82)"/></svg>
      <svg class="w-11 h-11" viewBox="-22 -22 44 44"><circle cx="-2" cy="-3" r="10" fill="#aac6e6" stroke="#33414f" stroke-width="2"/><path d="M3 4L13 13" stroke="#333" stroke-width="5" stroke-linecap="round"/><path d="M-14-2L-3-13V-7C6-8 10-3 9 4C6 1 2-1-3-1V5z" fill="#2f80c8" stroke="#1a4e80"/></svg>

      <div class="col-span-2 h-[4px] pt-[3px] pr-[4px]"><div class="h-px bg-[#a8a8a8]"></div></div>
    </div>
  </aside>

  <!-- 3D viewport -->
  <section class="flex-1 relative bg-[#cdcdcb] min-w-0">
    <div class="h-[157px] bg-linear-to-b from-[#d2d6d8] to-[#f2f4f4]"></div>
    <svg class="absolute inset-0 w-full h-full" viewBox="92 150 1798 845">
      <defs>
        <linearGradient id="woodA" x1="0" x2="1" y1="0" y2="0">
          <stop offset="0" stop-color="#7b5d4a"/><stop offset=".22" stop-color="#8a6a52"/><stop offset=".4" stop-color="#7d5e4a"/><stop offset=".58" stop-color="#8c6d55"/><stop offset=".78" stop-color="#795b46"/><stop offset="1" stop-color="#83634d"/>
        </linearGradient>
        <linearGradient id="woodB" x1="0" x2="1" y1="0" y2="0">
          <stop offset="0" stop-color="#866851"/><stop offset=".3" stop-color="#7a5b46"/><stop offset=".55" stop-color="#886851"/><stop offset=".8" stop-color="#7c5d48"/><stop offset="1" stop-color="#84644c"/>
        </linearGradient>
        <linearGradient id="drawer" x1="0" x2="1" y1="0" y2="0.1">
          <stop offset="0" stop-color="#745541"/><stop offset=".5" stop-color="#82624c"/><stop offset="1" stop-color="#72533f"/>
        </linearGradient>
        <clipPath id="lens"><circle cx="548" cy="368" r="296"/></clipPath>
      </defs>

      <!-- axes -->
      <path d="M1182 150L1177 434" stroke="#3a3acd" stroke-width="1.2" fill="none"/>
      <path d="M1163 860L1557 307" stroke="#4aa84a" stroke-width="1.1" fill="none"/>
      <path d="M1163 860L1890 975" stroke="#c8302c" stroke-width="1.1" fill="none"/>
      <path d="M1163 860L95 688" stroke="#a85050" stroke-width="1" stroke-dasharray="1.5 4" fill="none"/>
      <path d="M1163 860L1065 995" stroke="#5a8a5a" stroke-width="1" stroke-dasharray="1.5 4" fill="none"/>
      <path d="M1163 860L1161 995" stroke="#4a4aa8" stroke-width="1" stroke-dasharray="1.5 4" fill="none"/>

      <!-- cabinet, drawn in a 3x crop's coordinates -->
      <g transform="translate(680 400) scale(.33333)" stroke-linejoin="round">
        <path d="M85 62L1448 115L1412 1426L136 1220z" fill="#1d1816"/>
        <path d="M85 62L130 50L1485 100L1448 115z" fill="#4d3a2e" stroke="#1d1715" stroke-width="2"/>
        <path d="M1448 115L1485 100L1452 1370L1415 1425z" fill="#5c4334" stroke="#1d1715" stroke-width="2"/>
        <path d="M1485 100L1452 1370" stroke="#3a3ac8" stroke-width="3" fill="none"/>
        <path d="M1426 1078L1462 1052" stroke="#1d1715" stroke-width="3"/>

        <!-- left doors and drawers -->
        <path d="M85 68L255 78L272 928L120 914z" fill="url(#woodA)" stroke="#181412" stroke-width="3"/>
        <path d="M250 78L420 88L432 958L272 928z" fill="url(#woodB)" stroke="#181412" stroke-width="3"/>
        <path d="M263 672H277L285 930H270z" fill="#241f1d" stroke="#111" stroke-width="2"/>
        <path d="M118 916L432 954V968L118 930z" fill="#3a2e28" stroke="#111" stroke-width="2"/>
        <path d="M120 932L432 968L434 1058L124 1016z" fill="url(#drawer)" stroke="#181412" stroke-width="3"/>
        <path d="M124 1026L434 1068L436 1154L127 1108z" fill="url(#drawer)" stroke="#181412" stroke-width="4"/>
        <path d="M128 1118L436 1160L438 1248L134 1205z" fill="url(#drawer)" stroke="#181412" stroke-width="4"/>
        <path d="M134 1206L438 1248V1266L136 1220z" fill="#555553" stroke="#222" stroke-width="2"/>

        <!-- centre carcass -->
        <path d="M410 72L1030 102L1026 1376L438 1282z" fill="#3f4041" stroke="#151515" stroke-width="3"/>
        <path d="M410 70L1030 100V114L410 84z" fill="#2b2b2c"/>
        <path d="M880 110L1012 114V252L880 242z" fill="#424344"/>
        <path d="M810 105L880 108V242L815 268z" fill="#2e2f30"/>
        <path d="M826 266L880 243L1014 252V278z" fill="#282829"/>
        <path d="M826 268L1014 282" stroke="#111" stroke-width="3"/>
        <path d="M835 397L1012 405V432L840 425z" fill="#282829"/>
        <path d="M810 442L880 440V545L815 576z" fill="#2e2f30"/>
        <path d="M880 445L1012 435V555L880 545z" fill="#424344"/>
        <path d="M815 574L880 545L1014 556V592z" fill="#282829"/>
        <path d="M815 578L1014 598" stroke="#111" stroke-width="3"/>
        <path d="M616 670L700 640L720 660L700 685L622 716z" fill="#333435"/>
        <path d="M432 670L614 670L618 716L435 698z" fill="#2a2a2b"/>
        <path d="M620 716L700 685L1014 712V752z" fill="#282829"/>
        <path d="M434 698L1016 752V768L434 712z" fill="#2c2c2d" stroke="#111" stroke-width="2"/>
        <path d="M510 722L1014 768V970L510 910z" fill="#414243"/>
        <path d="M436 710L510 720V910L440 948z" fill="#2f3031"/>
        <path d="M442 950L510 910L1014 970V1025z" fill="#2a2a2b"/>
        <path d="M438 958L1014 1024V1370L438 1280z" fill="#3c3d3e"/>
        <path d="M1014 108L1018 1372" stroke="#101010" stroke-width="4"/>
        <path d="M1018 104H1030L1026 1376L1016 1372z" fill="#2f3031" stroke="#101010" stroke-width="2"/>

        <!-- magnifier lens -->
        <g clip-path="url(#lens)">
          <rect x="240" y="60" width="620" height="620" fill="#3f4041"/>
          <path d="M240 70L352 90L372 690L240 690z" fill="#7c5e4a"/>
          <path d="M358 178L450 148L745 165L780 205z" fill="#28292a"/>
          <path d="M470 90L805 100V165L470 148z" fill="#434445"/>
          <path d="M410 80L470 85V148L360 178z" fill="#2e2f30"/>
          <path d="M358 182L780 208" stroke="#0f0f0f" stroke-width="4"/>
          <path d="M360 190L475 198L480 370L365 400z" fill="#2e2f30"/>
          <path d="M475 198L640 205V370L480 370z" fill="#434445"/>
          <path d="M640 208L755 215V385L650 420z" fill="#2e2f30"/>
          <path d="M755 215L860 220V400L755 385z" fill="#434445"/>
          <path d="M365 402L480 368L640 375L650 420L755 385L860 396V440L365 408z" fill="#28292a"/>
          <path d="M365 408L860 447" stroke="#0f0f0f" stroke-width="4"/>
          <path d="M365 415L482 430L486 582L372 604z" fill="#2e2f30"/>
          <path d="M482 430L815 447V585L486 582z" fill="#434445"/>
          <path d="M810 445L860 445V560L810 585z" fill="#2e2f30"/>
          <path d="M388 620L490 582L735 600L650 652L420 632z" fill="#28292a"/>
          <path d="M420 634L645 658" stroke="#0f0f0f" stroke-width="4"/>
          <path d="M650 652L735 600H860V680H420V650z" fill="#3c3d3e"/>
          <path d="M352 90L372 690" stroke="#111" stroke-width="3"/>
        </g>
        <circle cx="548" cy="368" r="296" fill="none" stroke="#111" stroke-opacity=".85" stroke-width="9"/>
        <path d="M547 376V424L559 413L566 432L577 428L569 409L582 408z" fill="#222" stroke="#e8e8e8" stroke-width="2.5"/>

        <!-- right doors and drawers -->
        <path d="M1030 112L1235 120L1215 1052L1030 1036z" fill="url(#woodB)" stroke="#181412" stroke-width="3"/>
        <path d="M1235 120L1447 125L1422 1080L1215 1052z" fill="url(#woodA)" stroke="#181412" stroke-width="3"/>
        <path d="M1216 770H1234L1230 1054H1212z" fill="#292523" stroke="#111" stroke-width="2"/>
        <path d="M1030 1036L1424 1082V1098L1030 1050z" fill="#3a2e28" stroke="#111" stroke-width="2"/>
        <path d="M1030 1052L1422 1100L1418 1196L1030 1146z" fill="url(#drawer)" stroke="#181412" stroke-width="3"/>
        <path d="M1030 1155L1418 1206L1416 1302L1030 1246z" fill="url(#drawer)" stroke="#181412" stroke-width="4"/>
        <path d="M1030 1254L1416 1312L1412 1410L1030 1346z" fill="url(#drawer)" stroke="#181412" stroke-width="4"/>
        <path d="M1030 1348L1412 1412V1426L1030 1362z" fill="#555553" stroke="#222" stroke-width="2"/>
      </g>
    </svg>
  </section>

  <!-- tray label -->
  <aside class="w-[30px] bg-[#f0f0f0]">
    <div class="h-[76px] w-[20px] border-l border-[#444] pt-[2px] flex justify-center">
      <span class="[writing-mode:vertical-rl] [text-orientation:sideways] text-[15px] leading-none text-[#333]">默认面板</span>
    </div>
  </aside>
</main>

<!-- status bar -->
<footer class="h-[35px] pt-[2px] bg-[#f0f0f0] flex items-center relative">
  <svg class="w-[32px] h-[33px]" viewBox="-16 -16 32 33"><circle cy="0" r="8" fill="none" stroke="#a8a8a8" stroke-width="1.4"/><path d="M0 6C-4 1-4 0-4-2C-4-7 4-7 4-2C4 0 4 1 0 6z" fill="#bdbdbd"/><circle cy="-2" r="1.5" fill="#f0f0f0"/></svg>
  <svg class="w-[26px] h-[33px]" viewBox="-13 -16 26 33"><circle r="8" fill="#fff" stroke="#222" stroke-width="1.4"/><circle cy="-4" r="1.4" fill="#222"/><path d="M-2.5-1.5H2.5L1.5 5H-1.5z" fill="#222"/></svg>
  <div class="w-px h-[28px] bg-[#a8a8a8] ml-[8px]"></div>
  <span class="ml-[6px] text-[16.9px] text-[#222] whitespace-nowrap">单击或拖动以选择对象。Shift = 加/减。Ctrl = 加。Shift + Ctrl = 减。</span>
  <div class="ml-auto w-px h-[28px] bg-[#a8a8a8]"></div>
  <span class="ml-[12px] mr-[8px] text-[15px] text-[#222]">数值</span>
  <div class="w-[201px] h-[29px] bg-[#f0f0f0] border border-[#8a8a8a]"></div>
</footer>

<!-- taskbar -->
<footer class="h-[50px] bg-[#16181f] flex relative overflow-hidden">
  <div class="absolute left-[10px] top-[3px] w-[40px] h-[40px] rounded-[9px] bg-[#4a4c50]"></div>
  <span class="absolute left-[58px] top-0 text-[36px] leading-[46px] font-bold tracking-[1px] text-[#3f4146]">tafe.cc</span>
  <div class="w-[69px] flex items-center justify-center relative pb-[2px]">
    <svg class="w-[21px] h-[21px] -ml-[8px]" viewBox="0 0 20 20" fill="#f4f4f4"><path d="M1 3.2L9 2V9.5H1zM10 1.9L19 .8V9.5H10zM1 10.5H9V18L1 16.8zM10 10.5H19V19.2L10 18.1z"/></svg>
  </div>
  <div class="w-[51px] border-b-[3px] border-[#76b4dc] flex items-center justify-center relative">
    <svg class="w-[31px] h-[31px]" viewBox="0 0 31 31"><rect width="31" height="31" rx="2" fill="#5fb41f"/><path d="M23 7H10V24H23" fill="none" stroke="#eef7de" stroke-width="4"/></svg>
  </div>
  <div class="w-[51px] ml-[11px] border-b-[3px] border-[#76b4dc] flex items-center justify-center relative">
    <svg class="w-[31px] h-[31px]" viewBox="0 0 31 31"><rect width="31" height="31" fill="#e4eee8"/><text x="15" y="20" text-anchor="middle" font-family="'Liberation Sans',sans-serif" font-weight="700" font-size="21" fill="#2f9a90">3</text><text x="18" y="29" text-anchor="middle" font-family="'Liberation Sans',sans-serif" font-size="6" fill="#7fb8b0">MAX</text></svg>
  </div>
  <div class="w-[51px] ml-[11px] border-b-[3px] border-[#76b4dc] flex items-center justify-center relative">
    <svg class="w-[31px] h-[31px]" viewBox="0 0 31 31"><path d="M0 0H31V31H6L0 26z" fill="#c01a3a"/><text x="16" y="17" text-anchor="middle" font-family="'Liberation Sans',sans-serif" font-weight="700" font-size="15" fill="#fff">A</text><text x="16" y="28" text-anchor="middle" font-family="'Liberation Sans',sans-serif" font-weight="700" font-size="7" fill="#fff">CAD</text></svg>
  </div>
  <div class="w-[62px] ml-[5px] bg-[#3c3e44] border-b-[3px] border-[#76b4dc] flex items-center justify-center">
    <svg class="w-[31px] h-[31px]" viewBox="-15.5 -15.5 31 31"><rect x="-15.5" y="-15.5" width="31" height="31" fill="#fff"/><use href="#su"/></svg>
  </div>
  <div class="w-[51px] ml-[5px] border-b-[3px] border-[#76b4dc] flex items-center justify-center">
    <svg class="w-[31px] h-[31px]" viewBox="0 0 31 31"><rect width="31" height="31" rx="2" fill="#e8493c"/><path d="M23 7H10V24H23" fill="none" stroke="#fbe6e2" stroke-width="4"/></svg>
  </div>

  <div class="ml-auto flex items-center text-[#e8e8e8] pr-[30px] relative">
    <svg class="w-[20px] h-[14px]" viewBox="0 0 20 14" fill="none" stroke="#d8d8d8" stroke-width="1.2"><path d="M2 11L10 3L18 11"/></svg>
    <svg class="w-[18px] h-[26px] ml-[10px]" viewBox="0 0 18 26"><rect x="5" y="1" width="8" height="15" rx="4" fill="#e8e8e8"/><path d="M2 11C2 22 16 22 16 11M9 19V24M5 24H13" fill="none" stroke="#d8d8d8"/></svg>
    <svg class="w-[24px] h-[22px] ml-[9px]" viewBox="0 0 24 22" fill="none" stroke="#d8d8d8"><path d="M4 3H22V16H4zM13 16V20M7 20H19"/><rect x="1" y="2" width="5" height="8" fill="#16181f"/></svg>
    <svg class="w-[24px] h-[22px] ml-[7px]" viewBox="0 0 24 22" fill="none" stroke="#d8d8d8"><path d="M2 8H5L10 3V19L5 14H2zM13 8C14 10 14 12 13 14M16 6C18 9 18 13 16 16" /><path d="M19 3C22 8 22 14 19 19" stroke-opacity=".45"/></svg>
    <span class="ml-[12px] text-[14px] leading-none font-['Noto_Sans',sans-serif] text-[#e8e8e8]">ENG</span>
    <svg class="w-[22px] h-[22px] ml-[21px]" viewBox="0 0 22 22" fill="none" stroke="#e4e4e4" stroke-width="1.2"><path d="M1.5 2.5H20.5V17.5H14L11 20L8 17.5H1.5z"/></svg>
  </div>
  <div class="absolute right-[0] top-0 w-px h-full bg-[#4a4c52] mr-[2px]"></div>
</footer>
</body>
</html>
